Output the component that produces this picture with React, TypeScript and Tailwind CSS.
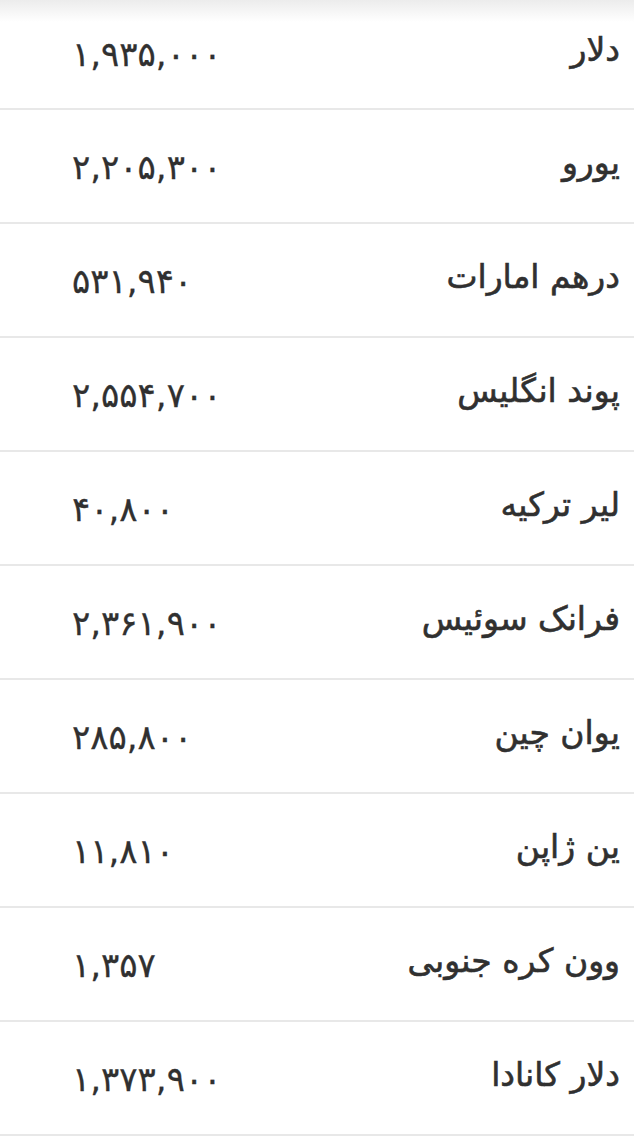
const RATES = [
  { name: "دلار", price: "۱,۹۳۵,۰۰۰" },
  { name: "یورو", price: "۲,۲۰۵,۳۰۰" },
  { name: "درهم امارات", price: "۵۳۱,۹۴۰" },
  { name: "پوند انگلیس", price: "۲,۵۵۴,۷۰۰" },
  { name: "لیر ترکیه", price: "۴۰,۸۰۰" },
  { name: "فرانک سوئیس", price: "۲,۳۶۱,۹۰۰" },
  { name: "یوان چین", price: "۲۸۵,۸۰۰" },
  { name: "ین ژاپن", price: "۱۱,۸۱۰" },
  { name: "وون کره جنوبی", price: "۱,۳۵۷" },
  { name: "دلار کانادا", price: "۱,۳۷۳,۹۰۰" },
];

export default function App() {
  return (
    <div
      dir="rtl"
      className="w-full min-h-screen bg-white bg-[linear-gradient(to_bottom,#ececec,#ffffff_22px)] text-[#303030] font-['DejaVu_Sans',sans-serif]"
    >
      {RATES.map((r, idx) => (
        <div
          key={idx}
          className={`flex items-center justify-between border-b-2 border-[#e8e8e8] pr-[14px] pl-[72px] ${idx === 0 ? "h-[110px] pb-[2px]" : "h-[114px]"}`}
        >
          <span className="text-[33px] leading-none pb-[8px] [-webkit-text-stroke:0.6px_#303030]">
            {r.name}
          </span>
          <span dir="ltr" className="text-[34px] leading-none pt-[2px] [-webkit-text-stroke:0.3px_#303030]">
            {r.price}
          </span>
        </div>
      ))}
    </div>
  );
}
